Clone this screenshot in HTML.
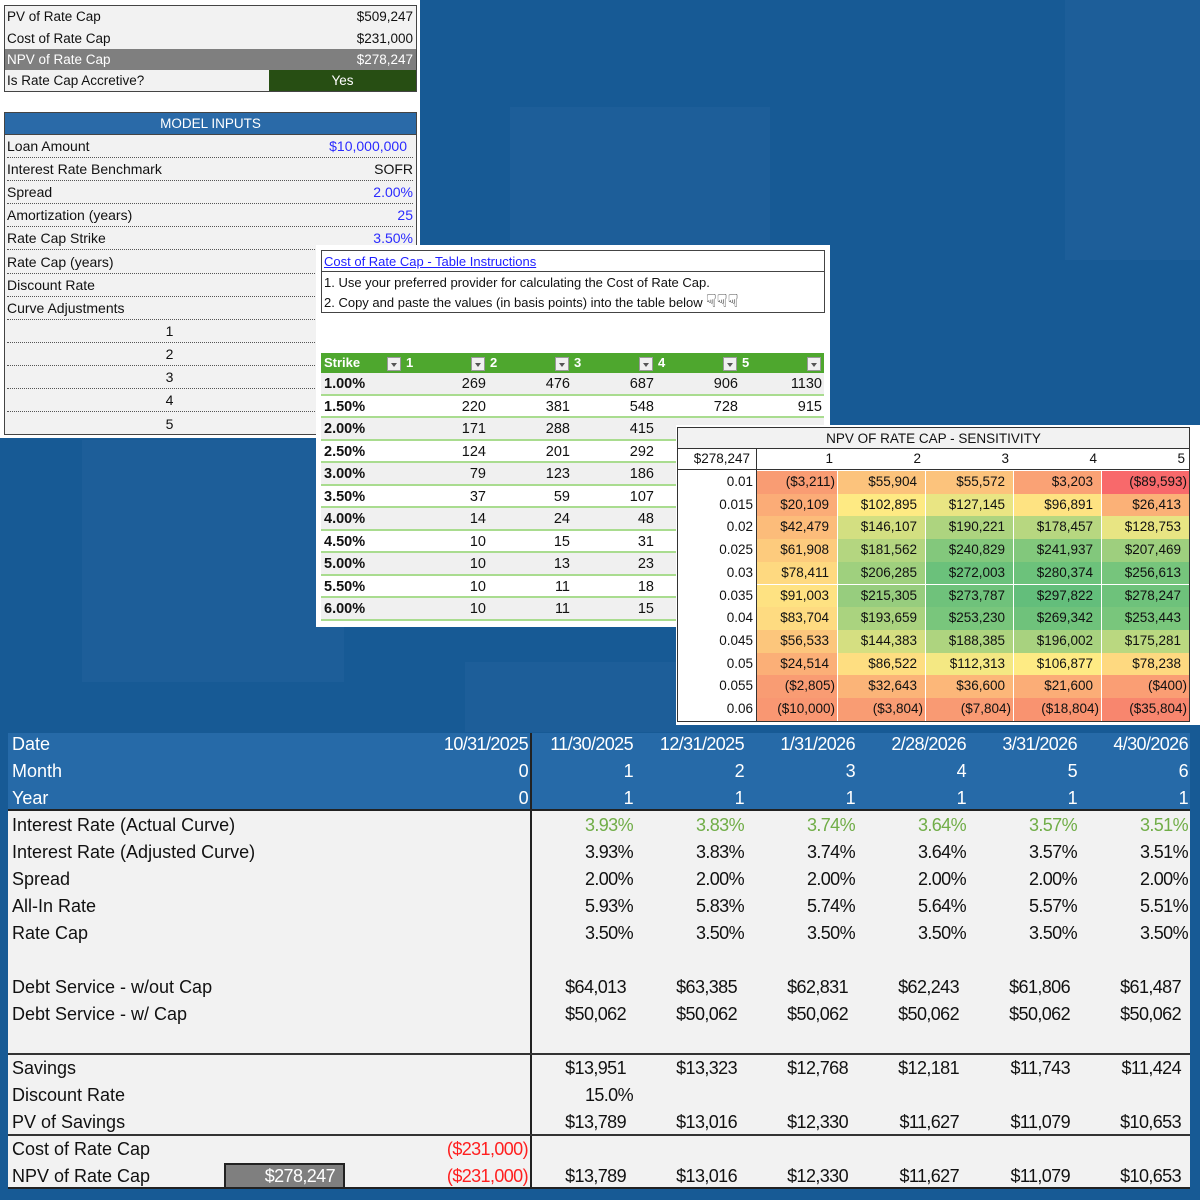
<!DOCTYPE html>
<html><head><meta charset="utf-8"><style>
*{box-sizing:border-box;margin:0;padding:0}
body{width:1200px;height:1200px;background:#175a95;position:relative;overflow:hidden;font-family:"Liberation Sans",sans-serif;color:#111}
.a{position:absolute}
.patch{position:absolute;background:#2a6aa2;opacity:.3}
.row{position:absolute;display:flex;align-items:center;white-space:nowrap}
.c{overflow:hidden;white-space:nowrap}
.r{text-align:right}
.n{letter-spacing:-0.6px}
</style></head><body>
<div class="patch" style="left:82px;top:440px;width:262px;height:242px"></div>
<div class="patch" style="left:465px;top:662px;width:215px;height:70px"></div>
<div class="patch" style="left:510px;top:107px;width:260px;height:260px"></div>
<div class="patch" style="left:1065px;top:0;width:135px;height:260px"></div>

<!-- top-left panel -->
<div class="a" style="left:0;top:0;width:420px;height:438px;background:#fff"></div>
<div class="a" style="left:4px;top:5px;width:413px;height:87px;border:1px solid #444;background:#f2f2f2;font-size:13.5px">
 <div class="row" style="left:2px;top:0;width:406px;height:21px;justify-content:space-between"><span>PV of Rate Cap</span><span>$509,247</span></div>
 <div class="row" style="left:2px;top:21px;width:406px;height:22px;justify-content:space-between"><span>Cost of Rate Cap</span><span>$231,000</span></div>
 <div class="row" style="left:0;top:43px;width:411px;height:21px;background:#7f7f7f;color:#fff;padding:0 3px 0 2px;justify-content:space-between"><span>NPV of Rate Cap</span><span>$278,247</span></div>
 <div class="row" style="left:2px;top:64px;width:260px;height:21px"><span>Is Rate Cap Accretive?</span></div>
 <div class="row" style="left:264px;top:64px;width:147px;height:21px;background:#274e13;color:#fff;justify-content:center">Yes</div>
</div>
<div class="a" style="left:4px;top:112px;width:413px;height:323px;border:1px solid #444;background:#f2f2f2;font-size:14px">
 <div class="row" style="left:0;top:0;width:411px;height:22px;background:#2a6aa8;color:#fff;justify-content:center;font-size:13.5px;border-bottom:1px solid #444">MODEL INPUTS</div>
 <div id="mi"></div>
</div>

<!-- instructions panel -->
<div class="a" style="left:316px;top:245px;width:514px;height:382px;background:#fff"></div>
<div class="a" style="left:321px;top:250px;width:504px;height:63px;border:1px solid #444;font-size:13px">
 <div class="row" style="left:2px;top:0;height:20px;color:#1f1fff;text-decoration:underline">Cost of Rate Cap - Table Instructions</div>
 <div class="a" style="left:0;top:20px;width:502px;border-top:1px solid #444"></div>
 <div class="row" style="left:2px;top:21px;height:20px">1. Use your preferred provider for calculating the Cost of Rate Cap.</div>
 <div class="row" style="left:2px;top:41px;height:20px">2. Copy and paste the values (in basis points) into the table below <span style="font-family:'DejaVu Sans';font-size:18px;margin-left:3px;line-height:18px">☟☟☟</span></div>
</div>
<div class="a" style="left:321px;top:353px;width:503px;height:20px;background:#4ea72e;color:#fff;font-weight:bold;font-size:13px" id="sh"></div>
<div id="st"></div>

<!-- sensitivity -->
<div class="a" style="left:676px;top:425px;width:524px;height:300px;background:#fff"></div>
<div class="a" style="left:677px;top:427px;width:513px;height:295px;border:1px solid #333;font-size:13.5px">
 <div class="row" style="left:0;top:0;width:511px;height:21px;background:#f2f2f2;justify-content:center;border-bottom:1px solid #333">NPV OF RATE CAP - SENSITIVITY</div>
 <div id="sn"></div>
</div>

<!-- bottom table -->
<div class="a" style="left:8px;top:733px;width:1182px;height:456px;background:#f2f2f2;border-bottom:2px solid #222"></div>
<div class="a" style="left:8px;top:733px;width:1182px;height:78px;background:#266aa8;border-bottom:2px solid #222"></div>
<div class="a" style="left:530px;top:733px;width:2px;height:455px;background:#222"></div>
<div class="a" style="left:8px;top:1053px;width:1182px;height:2px;background:#333"></div>
<div class="a" style="left:8px;top:1134px;width:1182px;height:2px;background:#333"></div>
<div class="a n" style="left:224px;top:1163px;width:121px;height:26px;background:#7f7f7f;border:2px solid #222;color:#fff;font-size:18px;text-align:right;padding-right:8px;line-height:22px">$278,247</div>
<div id="bt"></div>

<script>
function el(p,html){document.getElementById(p).insertAdjacentHTML('beforeend',html)}
var mi=[["Loan Amount","$10,000,000","#2b2bff"],["Interest Rate Benchmark","SOFR","#111"],["Spread","2.00%","#2b2bff"],["Amortization (years)","25","#2b2bff"],["Rate Cap Strike","3.50%","#2b2bff"],["Rate Cap (years)","",""],["Discount Rate","",""],["Curve Adjustments","",""],["",""],["",""],["",""],["",""],["",""]];
for(var i=0;i<13;i++){var t=22+i*23.1;var m=mi[i];
 var lbl=i>=8?'<span style="position:absolute;left:0;width:325px;text-align:center">'+(i-7)+'</span>':'<span>'+m[0]+'</span>';
 el('mi','<div class="row" style="left:2px;top:'+t+'px;width:406px;height:23.1px;justify-content:space-between;'+(i<12?'border-bottom:1px dotted #555':'')+'">'+lbl+'<span style="color:'+m[2]+';padding-right:'+(i==0?6:0)+'px">'+m[1]+'</span></div>');}
var arr='<span style="display:inline-block;width:14px;height:14px;background:#f0f0f0;border:1px solid #999;vertical-align:middle;position:relative"><span style="position:absolute;left:3px;top:5px;border-left:3.5px solid transparent;border-right:3.5px solid transparent;border-top:4px solid #555"></span></span>';
el('sh','<span class="a" style="left:3px;top:2px">Strike</span>');
for(var j=0;j<6;j++){var x=66+j*84;el('sh','<span class="a" style="left:'+x+'px;top:2px">'+arr+'</span>'+(j<5?'<span class="a" style="left:'+(x+19)+'px;top:2px">'+(j+1)+'</span>':''));}
var sd=[["1.00%",269,476,687,906,1130],["1.50%",220,381,548,728,915],["2.00%",171,288,415],["2.50%",124,201,292],["3.00%",79,123,186],["3.50%",37,59,107],["4.00%",14,24,48],["4.50%",10,15,31],["5.00%",10,13,23],["5.50%",10,11,18],["6.00%",10,11,15]];
for(var i=0;i<11;i++){var t=373+i*22.5;var h='<div class="a" style="left:321px;top:'+t+'px;width:503px;height:22.5px;background:'+(i%2?'#fff':'#f0f0f0')+';border-bottom:2px solid #a9dc8f;font-size:14.5px"><span class="a" style="left:3px;top:3px;font-weight:bold">'+sd[i][0]+'</span>';
 for(var j=1;j<sd[i].length;j++){h+='<span class="a r" style="left:'+(j*84-84+100)+'px;top:3px;width:65px">'+sd[i][j]+'</span>';}
 el('st',h+'</div>');}
var sc=['1','2','3','4','5'];var cx=[78,159,247,335,423,511];
var h='<div class="a" style="left:0;top:21px;width:511px;height:21px;border-bottom:1px solid #333"><span class="a r" style="left:0;width:72px;top:2px">$278,247</span>';
for(var j=0;j<5;j++)h+='<span class="a r" style="left:'+cx[j]+'px;width:'+(cx[j+1]-cx[j]-4)+'px;top:2px">'+sc[j]+'</span>';
el('sn',h+'</div><div class="a" style="left:78px;top:21px;width:1px;height:272px;background:#333"></div>');
var rl=['0.01','0.015','0.02','0.025','0.03','0.035','0.04','0.045','0.05','0.055','0.06'];
var sv=[["($3,211)","$55,904","$55,572","$3,203","($89,593)"],["$20,109","$102,895","$127,145","$96,891","$26,413"],["$42,479","$146,107","$190,221","$178,457","$128,753"],["$61,908","$181,562","$240,829","$241,937","$207,469"],["$78,411","$206,285","$272,003","$280,374","$256,613"],["$91,003","$215,305","$273,787","$297,822","$278,247"],["$83,704","$193,659","$253,230","$269,342","$253,443"],["$56,533","$144,383","$188,385","$196,002","$175,281"],["$24,514","$86,522","$112,313","$106,877","$78,238"],["($2,805)","$32,643","$36,600","$21,600","($400)"],["($10,000)","($3,804)","($7,804)","($18,804)","($35,804)"]];
var cc=[["#f99c73","#fcc37c","#fcc37c","#faa275","#f8696b"],["#fbac77","#feea83","#e9e583","#fee382","#fbb177"],["#fcbc7a","#d3df81","#add47f","#b7d780","#e8e583"],["#fdcb7d","#b4d680","#83c87c","#82c87c","#9ecf7e"],["#fed980","#9fd07e","#6bc17b","#6cc27b","#76c57c"],["#fee282","#97cd7e","#6fc27b","#63be7b","#6ec27b"],["#fedb81","#aad37f","#79c67c","#6fc27b","#79c67c"],["#fcc67c","#d5df81","#aed47f","#a8d27f","#bad880"],["#fbaf77","#fede81","#f4e883","#feeb84","#fed980"],["#f99c73","#fbb478","#fcb779","#fbad77","#fa9e74"],["#f99772","#f99c73","#f99a73","#f99370","#f8866e"]];
for(var i=0;i<11;i++){var t=43+i*22.7;var h='<span class="a r" style="left:0;width:75px;top:'+(t+3)+'px">'+rl[i]+'</span>';
 for(var j=0;j<5;j++){var w=cx[j+1]-cx[j];var v=sv[i][j];var par=v[0]=='(';
  h+='<div class="a r" style="left:'+(cx[j]+1)+'px;top:'+t+'px;width:'+(w-1)+'px;height:22.7px;background:'+cc[i][j]+';padding:3px '+(par?2:8)+'px 0 0">'+v+'</div>';}
 el('sn',h);}
var cols=[531,642,753,864,975,1086,1197];
function brow(y,label,vals,o){o=o||{};var h='<div class="a" style="left:12px;top:'+y+'px;font-size:18px;color:'+(o.hc||'#111')+'">'+label+'</div>';
 for(var j=0;j<vals.length;j++){if(vals[j]==null)continue;var v=vals[j];var dol=v[0]=='$';var right,left;
  if(j==0){left=300;right=528;}else{left=cols[j-1];right=cols[j]-(dol?16:9);}
  h+='<div class="a r n" style="left:'+left+'px;width:'+(right-left)+'px;top:'+y+'px;font-size:18px;color:'+(o.c&&j>0?o.c:(o.c0&&j==0?o.c0:(o.hc||'#111')))+'">'+v+'</div>';}
 el('bt',h);}
brow(734,'Date',['10/31/2025','11/30/2025','12/31/2025','1/31/2026','2/28/2026','3/31/2026','4/30/2026'],{hc:'#fff'});
brow(761,'Month',['0','1','2','3','4','5','6'],{hc:'#fff'});
brow(788,'Year',['0','1','1','1','1','1','1'],{hc:'#fff'});
brow(815,'Interest Rate (Actual Curve)',[null,'3.93%','3.83%','3.74%','3.64%','3.57%','3.51%'],{c:'#70ad47'});
brow(842,'Interest Rate (Adjusted Curve)',[null,'3.93%','3.83%','3.74%','3.64%','3.57%','3.51%']);
brow(869,'Spread',[null,'2.00%','2.00%','2.00%','2.00%','2.00%','2.00%']);
brow(896,'All-In Rate',[null,'5.93%','5.83%','5.74%','5.64%','5.57%','5.51%']);
brow(923,'Rate Cap',[null,'3.50%','3.50%','3.50%','3.50%','3.50%','3.50%']);
brow(977,'Debt Service - w/out Cap',[null,'$64,013','$63,385','$62,831','$62,243','$61,806','$61,487']);
brow(1004,'Debt Service - w/ Cap',[null,'$50,062','$50,062','$50,062','$50,062','$50,062','$50,062']);
brow(1058,'Savings',[null,'$13,951','$13,323','$12,768','$12,181','$11,743','$11,424']);
brow(1085,'Discount Rate',[null,'15.0%']);
brow(1112,'PV of Savings',[null,'$13,789','$13,016','$12,330','$11,627','$11,079','$10,653']);
brow(1139,'Cost of Rate Cap',['($231,000)'],{c0:'#ff1f1f'});
brow(1166,'NPV of Rate Cap',['($231,000)','$13,789','$13,016','$12,330','$11,627','$11,079','$10,653'],{c0:'#ff1f1f'});
</script>
</body></html>
